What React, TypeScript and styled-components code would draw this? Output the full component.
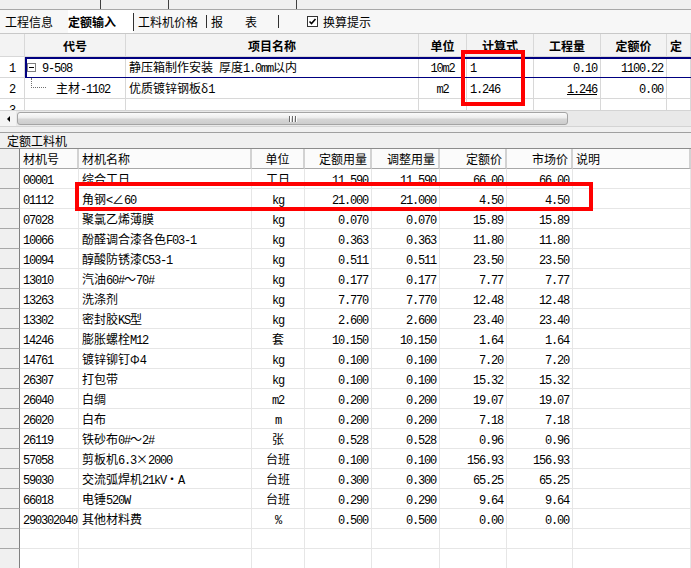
import React from "react";
import styled, { createGlobalStyle, css } from "styled-components";

const GlobalStyle = createGlobalStyle`
  html, body {
    margin: 0;
    padding: 0;
  }
  body {
    font-family: "Noto Sans CJK SC", "Liberation Sans", sans-serif;
    font-size: 12px;
    color: #000;
  }
`;

type Align = "left" | "center" | "right";

const justify = (a: Align = "left") =>
  a === "right" ? "flex-end" : a === "center" ? "center" : "flex-start";

const Page = styled.div`
  position: relative;
  width: 691px;
  height: 568px;
  overflow: hidden;
  background: #f0f0f0;
  display: flex;
  flex-direction: column;
`;

// --- cut-off toolbar strip at the very top ---
const TopStrip = styled.div`
  height: 9px;
  display: flex;
  background: #f0f0f0;
  border-bottom: 1px solid #a8a8a8;
`;

const StripPart = styled.div<{ $w: number }>`
  width: ${(p) => p.$w}px;
  border-right: 1px solid #404040;
  box-sizing: border-box;
`;

// --- tabs ---
const TabBar = styled.div`
  height: 23px;
  display: flex;
  align-items: center;
  background: #f7f7f7;
  border-bottom: 1px solid #c8c8c8;
`;

const Tab = styled.div<{ $w: number; $pad?: number; $bold?: boolean; $active?: boolean }>`
  width: ${(p) => p.$w}px;
  padding-left: ${(p) => p.$pad ?? 0}px;
  box-sizing: border-box;
  height: 100%;
  display: flex;
  align-items: center;
  white-space: nowrap;
  font-weight: ${(p) => (p.$bold ? 700 : 400)};
  background: ${(p) => (p.$active ? "#fff" : "transparent")};
`;

const TabDivider = styled.div<{ $h: number }>`
  width: 1px;
  height: ${(p) => p.$h}px;
  background: #303030;
`;

const Spaced = styled.span`
  letter-spacing: 22px;
`;

const Check = styled.span`
  width: 11px;
  height: 11px;
  box-sizing: border-box;
  border: 1px solid #333;
  background: #fff;
  display: inline-flex;
  align-items: center;
  justify-content: center;
  margin-right: 5px;
`;

// --- text runs: latin parts in the narrow mono face ---
const Text = styled.span`
  white-space: pre;
`;

const Latin = styled.span`
  font-family: "Liberation Mono", "DejaVu Sans Mono", monospace;
  font-size: 12px;
  letter-spacing: -1.2px;
`;

const ASCII = /^[\x20-\x7E]+$/;
function mixed(text: string) {
  return (
    <Text>
      {text
        .split(/([\x20-\x7E]+)/)
        .filter(Boolean)
        .map((part, i) =>
          ASCII.test(part) ? (
            <Latin key={i}>{part}</Latin>
          ) : (
            <React.Fragment key={i}>{part}</React.Fragment>
          )
        )}
    </Text>
  );
}

// --- upper grid (定额) ---
const upperCols = "25px 101px 293px 48px 67px 67px 66px 1fr";

const UpperTable = styled.div`
  height: 76px;
  overflow: hidden;
  background: #fff;
`;

const URow = styled.div<{ $h: number; $head?: boolean; $selected?: boolean }>`
  position: relative;
  display: grid;
  grid-template-columns: ${upperCols};
  height: ${(p) => p.$h}px;
  background: ${(p) => (p.$head ? "#f3f3f3" : "#fff")};
  font-weight: ${(p) => (p.$head ? 700 : 400)};
  ${(p) =>
    p.$selected &&
    css`
      &::after {
        content: "";
        position: absolute;
        left: 25px;
        right: -4px;
        top: 0;
        bottom: -1px;
        border: 2px solid #000080;
        pointer-events: none;
      }
    `}
`;

const UCell = styled.div<{ $align?: Align; $under?: boolean }>`
  display: flex;
  align-items: center;
  justify-content: ${(p) => justify(p.$align)};
  padding: 0 3px 0 3px;
  border-right: 1px solid #d8d8d8;
  border-bottom: 1px solid #d8d8d8;
  overflow: hidden;
  white-space: nowrap;
  text-decoration: ${(p) => (p.$under ? "underline" : "none")};
`;

const CodeCell = styled(UCell)`
  padding-left: 2px;
`;

const Fold = styled.span`
  position: relative;
  width: 9px;
  height: 9px;
  box-sizing: border-box;
  border: 1px solid #808080;
  background: #fff;
  margin-right: 6px;
  flex: none;
  &::after {
    content: "";
    position: absolute;
    left: 1px;
    right: 1px;
    top: 3px;
    height: 1px;
    background: #000;
  }
`;

const Branch = styled.span`
  align-self: flex-start;
  width: 14px;
  height: 9px;
  margin-left: 4px;
  margin-right: 10px;
  border-left: 1px dotted #707070;
  border-bottom: 1px dotted #707070;
  flex: none;
`;

// --- horizontal scrollbar ---
const HScroll = styled.div`
  height: 15px;
  display: flex;
  align-items: center;
  background: #e9e9e9;
  border-top: 1px solid #d4d4d4;
  border-bottom: 1px solid #d4d4d4;
`;

const ArrowBtn = styled.div`
  width: 16px;
  height: 15px;
  display: flex;
  align-items: center;
  justify-content: center;
  background: #f4f4f4;
  &::before {
    content: "";
    border-top: 3px solid transparent;
    border-bottom: 3px solid transparent;
    border-right: 3px solid #000;
  }
`;

const Thumb = styled.div`
  width: 551px;
  height: 13px;
  margin-left: 1px;
  box-sizing: border-box;
  border: 1px solid #a4a4a4;
  border-radius: 3px;
  background: linear-gradient(#fbfbfb, #ececec 45%, #d6d6d6 55%, #cdcdcd);
  display: flex;
  align-items: center;
  justify-content: center;
  gap: 1px;
`;

const Grip = styled.span`
  width: 1px;
  height: 6px;
  background: #6a6a6a;
  box-shadow: 1px 0 0 #fff;
  margin-right: 1px;
`;

const Gap = styled.div`
  height: 5px;
`;

const SectionLabel = styled.div`
  height: 15px;
  display: flex;
  align-items: center;
  padding-left: 7px;
  background: #f0f0f0;
  border-top: 1px solid #a0a0a0;
  border-bottom: 1px solid #8c8c8c;
`;

// --- lower grid (定额工料机) ---
const lowerCols = "20px 59px 173px 53px 67px 68px 67px 66px 1fr";

const LowerTable = styled.div`
  flex: 1;
  background: #fff;
  overflow: hidden;
`;

const LRow = styled.div<{ $head?: boolean }>`
  display: grid;
  grid-template-columns: ${lowerCols};
  height: 20px;
  background: ${(p) => (p.$head ? "#fbfbfb" : "#fff")};
`;

const LCell = styled.div<{ $align?: Align; $head?: boolean; $gutter?: boolean }>`
  display: flex;
  align-items: center;
  justify-content: ${(p) => justify(p.$align)};
  padding: 0 3px;
  white-space: nowrap;
  overflow: hidden;
  border-bottom: 1px solid ${(p) => (p.$head ? "#a8a8a8" : "#e6e6e6")};
  border-right: ${(p) => (p.$head ? "2px solid #d2d2d2" : "1px solid #e6e6e6")};
  ${(p) =>
    p.$gutter &&
    css`
      background: #f0f0f0;
      border-right: 1px solid #808080;
      border-bottom: 1px solid #a8a8a8;
    `}
`;

const Mark = styled.div<{ $x: number; $y: number; $w: number; $h: number }>`
  position: absolute;
  left: ${(p) => p.$x}px;
  top: ${(p) => p.$y}px;
  width: ${(p) => p.$w}px;
  height: ${(p) => p.$h}px;
  box-sizing: border-box;
  border: 4px solid #f00;
  pointer-events: none;
`;

type Material = [string, string, string, string, string, string, string];

const materials: Material[] = [
  ["00001", "综合工日", "工日", "11.590", "11.590", "66.00", "66.00"],
  ["01112", "角钢<∠60", "kg", "21.000", "21.000", "4.50", "4.50"],
  ["07028", "聚氯乙烯薄膜", "kg", "0.070", "0.070", "15.89", "15.89"],
  ["10066", "酚醛调合漆各色F03-1", "kg", "0.363", "0.363", "11.80", "11.80"],
  ["10094", "醇酸防锈漆C53-1", "kg", "0.511", "0.511", "23.50", "23.50"],
  ["13010", "汽油60#～70#", "kg", "0.177", "0.177", "7.77", "7.77"],
  ["13263", "洗涤剂", "kg", "7.770", "7.770", "12.48", "12.48"],
  ["13302", "密封胶KS型", "kg", "2.600", "2.600", "23.40", "23.40"],
  ["14246", "膨胀螺栓M12", "套", "10.150", "10.150", "1.64", "1.64"],
  ["14761", "镀锌铆钉Φ4", "kg", "0.100", "0.100", "7.20", "7.20"],
  ["26307", "打包带", "kg", "0.100", "0.100", "15.32", "15.32"],
  ["26040", "白绸", "m2", "0.200", "0.200", "19.07", "19.07"],
  ["26020", "白布", "m", "0.200", "0.200", "7.18", "7.18"],
  ["26119", "铁砂布0#～2#", "张", "0.528", "0.528", "0.96", "0.96"],
  ["57058", "剪板机6.3×2000", "台班", "0.100", "0.100", "156.93", "156.93"],
  ["59030", "交流弧焊机21kV・A", "台班", "0.300", "0.300", "65.25", "65.25"],
  ["66018", "电锤520W", "台班", "0.290", "0.290", "9.64", "9.64"],
  ["290302040", "其他材料费", "%", "0.500", "0.500", "0.00", "0.00"],
];

const UpperGrid: React.FC = () => (
  <UpperTable>
    <URow $h={23} $head>
      <UCell />
      <UCell $align="center">代号</UCell>
      <UCell $align="center">项目名称</UCell>
      <UCell $align="center">单位</UCell>
      <UCell $align="center">计算式</UCell>
      <UCell $align="center">工程量</UCell>
      <UCell $align="center">定额价</UCell>
      <UCell>定</UCell>
    </URow>
    <URow $h={21} $selected>
      <UCell $align="center">{mixed("1")}</UCell>
      <CodeCell>
        <Fold />
        {mixed("9-508")}
      </CodeCell>
      <UCell>{mixed("静压箱制作安装 厚度1.0mm以内")}</UCell>
      <UCell $align="center">{mixed("10m2")}</UCell>
      <UCell>{mixed("1")}</UCell>
      <UCell $align="right">{mixed("0.10")}</UCell>
      <UCell $align="right">{mixed("1100.22")}</UCell>
      <UCell />
    </URow>
    <URow $h={21}>
      <UCell $align="center">{mixed("2")}</UCell>
      <CodeCell>
        <Branch />
        {mixed("主材-1102")}
      </CodeCell>
      <UCell>{mixed("优质镀锌钢板δ1")}</UCell>
      <UCell $align="center">{mixed("m2")}</UCell>
      <UCell>{mixed("1.246")}</UCell>
      <UCell $align="right" $under>
        {mixed("1.246")}
      </UCell>
      <UCell $align="right">{mixed("0.00")}</UCell>
      <UCell />
    </URow>
    <URow $h={21}>
      <UCell $align="center">{mixed("3")}</UCell>
      <UCell />
      <UCell />
      <UCell />
      <UCell />
      <UCell />
      <UCell />
      <UCell />
    </URow>
  </UpperTable>
);

const LowerGrid: React.FC = () => (
  <LowerTable>
    <LRow $head>
      <LCell $gutter />
      <LCell $head>材机号</LCell>
      <LCell $head>材机名称</LCell>
      <LCell $head $align="center">单位</LCell>
      <LCell $head $align="right">定额用量</LCell>
      <LCell $head $align="right">调整用量</LCell>
      <LCell $head $align="right">定额价</LCell>
      <LCell $head $align="right">市场价</LCell>
      <LCell $head>说明</LCell>
    </LRow>
    {materials.map(([code, name, unit, qty, adj, price, market]) => (
      <LRow key={code}>
        <LCell $gutter />
        <LCell>{mixed(code)}</LCell>
        <LCell>{mixed(name)}</LCell>
        <LCell $align="center">{mixed(unit)}</LCell>
        <LCell $align="right">{mixed(qty)}</LCell>
        <LCell $align="right">{mixed(adj)}</LCell>
        <LCell $align="right">{mixed(price)}</LCell>
        <LCell $align="right">{mixed(market)}</LCell>
        <LCell />
      </LRow>
    ))}
    {[0, 1].map((i) => (
      <LRow key={`empty-${i}`}>
        <LCell $gutter />
        <LCell />
        <LCell />
        <LCell />
        <LCell />
        <LCell />
        <LCell />
        <LCell />
        <LCell />
      </LRow>
    ))}
  </LowerTable>
);

const App: React.FC = () => (
  <>
    <GlobalStyle />
    <Page>
      <TopStrip>
        <StripPart $w={101} />
        <StripPart $w={68} />
        <StripPart $w={128} />
      </TopStrip>
      <TabBar>
        <Tab $w={68} $pad={5}>
          工程信息
        </Tab>
        <Tab $w={65} $bold $active>
          定额输入
        </Tab>
        <TabDivider $h={18} />
        <Tab $w={72} $pad={4}>
          工料机价格
        </Tab>
        <TabDivider $h={13} />
        <Tab $w={71} $pad={4}>
          <Spaced>报表</Spaced>
        </Tab>
        <TabDivider $h={13} />
        <Tab $w={28} />
        <Check>
          <svg width="9" height="9" viewBox="0 0 9 9">
            <path d="M1.5 4.5 L3.5 6.5 L7.5 2" fill="none" stroke="#000" strokeWidth="1.6" />
          </svg>
        </Check>
        <span>换算提示</span>
      </TabBar>
      <UpperGrid />
      <HScroll>
        <ArrowBtn />
        <Thumb>
          <Grip />
          <Grip />
          <Grip />
        </Thumb>
      </HScroll>
      <Gap />
      <SectionLabel>定额工料机</SectionLabel>
      <LowerGrid />
      <Mark $x={461} $y={50} $w={64} $h={56} />
      <Mark $x={75} $y={182} $w={518} $h={29} />
    </Page>
  </>
);

export default App;
